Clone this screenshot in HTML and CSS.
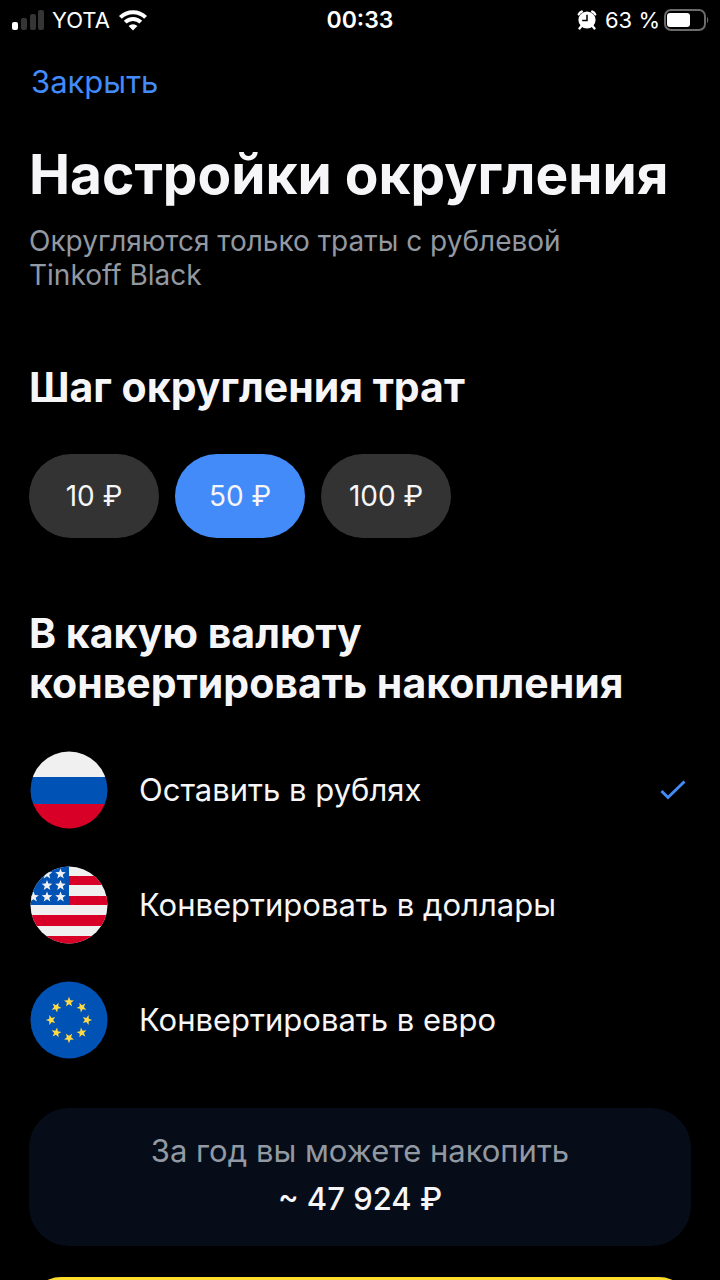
FILE: index.html
```html
<!DOCTYPE html>
<html lang="ru">
<head>
  <meta charset="UTF-8">
  <meta name="viewport" content="width=device-width, initial-scale=1">
  <title>Настройки округления</title>
  <link rel="stylesheet" href="styles.css">
</head>
<body>
  <div class="screen">

    <!-- Статус-бар -->
    <header class="status">
      <div class="status-left">
        <svg class="signal" width="34" height="20" viewBox="0 0 34 20" aria-hidden="true">
          <rect x="2" y="12" width="6" height="8" rx="2" fill="#fff"/>
          <rect x="11" y="8" width="6" height="12" rx="2" fill="#353535"/>
          <rect x="20" y="4" width="6" height="16" rx="2" fill="#353535"/>
          <rect x="28" y="0" width="6" height="20" rx="2" fill="#353535"/>
        </svg>
        <span>YOTA</span>
        <svg width="30" height="22" viewBox="0 0 30 22" aria-hidden="true">
          <g fill="none" stroke="#fff" stroke-width="4">
            <path d="M2.4 8.4a17.8 17.8 0 0 1 25.2 0"/>
            <path d="M7.2 13.2a11 11 0 0 1 15.6 0"/>
          </g>
          <path d="M15 21.4l-4.4-4.4a6.2 6.2 0 0 1 8.8 0z" fill="#fff"/>
        </svg>
      </div>
      <span class="status-time">00:33</span>
      <div class="status-right">
        <svg width="20" height="20" viewBox="0 0 20 20" aria-hidden="true">
          <g fill="none" stroke="#fff" stroke-width="2.4" stroke-linecap="round">
            <path d="M1.8 4.400a5 5 0 0 1 3-2.800M18.200 4.400a5 5 0 0 0-3-2.800M4.500 16l-2 2.400M15.500 16l2 2.400"/>
          </g>
          <circle cx="10" cy="10" r="8.600" fill="#fff"/>
          <path d="M10 4.800v5.700H5.200" fill="none" stroke="#000" stroke-width="1.500"/>
        </svg>
        <span>63 %</span>
        <svg class="battery" width="46" height="22" viewBox="0 0 46 22" aria-hidden="true">
          <rect x="1" y="1" width="40" height="20" rx="6" fill="none" stroke="#6b6b6b" stroke-width="2"/>
          <rect x="3" y="4" width="23" height="14" rx="3" fill="#fff"/>
          <path d="M43 7.500q2.500 3.500 0 7z" fill="#6b6b6b"/>
        </svg>
      </div>
    </header>

    <nav class="nav">
      <a href="#">Закрыть</a>
    </nav>

    <main class="content">
      <h1>Настройки округления</h1>
      <p class="subtitle">Округляются только траты с рублевой Tinkoff Black</p>

      <section class="step">
        <h2>Шаг округления трат</h2>
        <div class="chips">
          <button class="chip" type="button">10 ₽</button>
          <button class="chip chip-active" type="button">50 ₽</button>
          <button class="chip" type="button">100 ₽</button>
        </div>
      </section>

      <section class="currency">
        <h2>В какую валюту конвертировать накопления</h2>

        <label class="option">
          <svg class="flag" viewBox="0 0 78 78" aria-hidden="true">
            <defs>
              <clipPath id="circle"><circle cx="39" cy="39" r="38.500"/></clipPath>
              <polygon id="star" points="0,-10 2.500,-3.400 9.500,-3.100 4,1.300 5.900,8.100 0,4.200 -5.900,8.100 -4,1.300 -9.500,-3.100 -2.500,-3.400"/>
            </defs>
            <g clip-path="url(#circle)">
              <rect width="78" height="26" fill="#f0f0f0"/>
              <rect y="26" width="78" height="27" fill="#0052b4"/>
              <rect y="53" width="78" height="25" fill="#d80027"/>
            </g>
          </svg>
          <span class="option-name">Оставить в рублях</span>
          <input type="radio" name="currency" checked>
          <svg class="check" viewBox="0 0 28 28" aria-hidden="true">
            <path d="M2.500 15l6.500 6.500L25.500 5.500" fill="none" stroke="#428bf9" stroke-width="3"/>
          </svg>
        </label>

        <label class="option">
          <svg class="flag" viewBox="0 0 78 78" aria-hidden="true">
            <g clip-path="url(#circle)">
              <rect width="78" height="78" fill="#f0f0f0"/>
              <path d="M39 10h39v9H39zM39 30h39v9H39zM0 49h78v11H0zM0 70h78v8H0z" fill="#d80027"/>
              <rect width="39" height="39" fill="#0052b4"/>
              <g fill="#f0f0f0">
                <use href="#star" transform="translate(17 8) scale(.56)"/>
                <use href="#star" transform="translate(30.500 8) scale(.56)"/>
                <use href="#star" transform="translate(17 19.500) scale(.56)"/>
                <use href="#star" transform="translate(30.500 19.500) scale(.56)"/>
                <use href="#star" transform="translate(3.500 31) scale(.56)"/>
                <use href="#star" transform="translate(17 31) scale(.56)"/>
                <use href="#star" transform="translate(30.500 31) scale(.56)"/>
              </g>
            </g>
          </svg>
          <span class="option-name">Конвертировать в доллары</span>
          <input type="radio" name="currency">
          <svg class="check" viewBox="0 0 28 28" aria-hidden="true">
            <path d="M2.500 15l6.500 6.500L25.500 5.500" fill="none" stroke="#428bf9" stroke-width="3"/>
          </svg>
        </label>

        <label class="option">
          <svg class="flag" viewBox="0 0 78 78" aria-hidden="true">
            <circle cx="39" cy="39" r="38.500" fill="#0052b4"/>
            <g fill="#ffda44">
              <use href="#star" transform="translate(39 21) scale(.52)"/>
              <use href="#star" transform="translate(51.700 26.300) rotate(45) scale(.52)"/>
              <use href="#star" transform="translate(57 39) rotate(90) scale(.52)"/>
              <use href="#star" transform="translate(51.700 51.700) rotate(135) scale(.52)"/>
              <use href="#star" transform="translate(39 57) rotate(180) scale(.52)"/>
              <use href="#star" transform="translate(26.300 51.700) rotate(225) scale(.52)"/>
              <use href="#star" transform="translate(21 39) rotate(270) scale(.52)"/>
              <use href="#star" transform="translate(26.300 26.300) rotate(315) scale(.52)"/>
            </g>
          </svg>
          <span class="option-name">Конвертировать в евро</span>
          <input type="radio" name="currency">
          <svg class="check" viewBox="0 0 28 28" aria-hidden="true">
            <path d="M2.500 15l6.500 6.500L25.500 5.500" fill="none" stroke="#428bf9" stroke-width="3"/>
          </svg>
        </label>
      </section>

      <div class="forecast">
        <p class="forecast-label">За год вы можете накопить</p>
        <p class="forecast-sum">~ 47 924 ₽</p>
      </div>

      <button class="submit" type="button" aria-label="Сохранить"></button>
    </main>
  </div>
</body>
</html>
```
FILE: styles.css
```css
* {
  box-sizing: border-box;
}

body {
  margin: 0;
  background: #000;
  color: #f6f6f8;
  font-family: Inter, "Liberation Sans", sans-serif;
}

h1, h2, p {
  margin: 0;
}

.screen {
  height: 100vh;
  overflow: hidden;
}

/* Статус-бар */
.status {
  display: grid;
  grid-template-columns: 1fr auto 1fr;
  align-items: center;
  height: 39px;
  padding: 0 10px;
  font-size: 22px;
  color: #fff;
}

.status-left,
.status-right {
  display: flex;
  align-items: center;
  gap: 8px;
}

.status-right {
  justify-content: flex-end;
}

.battery {
  margin-left: -4px;
}

.status-time {
  font-size: 23px;
  font-weight: 600;
}

.nav {
  display: flex;
  align-items: center;
  height: 84px;
  padding: 0 31px;
}

.nav a {
  color: #428bf9;
  font-size: 31px;
  text-decoration: none;
}

.content {
  padding: 17px 29px 0;
}

h1 {
  font-size: 55px;
  line-height: 68px;
  font-weight: 700;
  white-space: nowrap;
}

.subtitle {
  max-width: 560px;
  margin-top: 16px;
  color: #9299a2;
  font-size: 28px;
  line-height: 34px;
}

h2 {
  font-size: 41px;
  line-height: 50px;
  font-weight: 700;
}

.step {
  margin-top: 70px;
}

.chips {
  display: flex;
  gap: 16px;
  margin-top: 42px;
}

.chip {
  width: 130px;
  height: 84px;
  padding: 0;
  border: none;
  border-radius: 42px;
  background: #333;
  color: #f6f6f8;
  font-family: inherit;
  font-size: 28px;
}

.chip-active {
  background: #428bf9;
}

.currency {
  margin-top: 70px;
}

.currency h2 {
  margin-bottom: 24px;
}

.option {
  display: grid;
  grid-template-columns: 78px 1fr 28px;
  column-gap: 31px;
  align-items: center;
  height: 115px;
  padding: 0 4px 0 1px;
}

.flag {
  width: 78px;
  height: 78px;
}

.option-name {
  font-size: 31px;
}

.option input,
.check {
  grid-row: 1;
  grid-column: 3;
  width: 28px;
  height: 28px;
  margin: 0;
}

.option input {
  appearance: none;
}

.check {
  visibility: hidden;
}

.option input:checked + .check {
  visibility: visible;
}

.forecast {
  margin-top: 31px;
  padding: 20px 20px 22px;
  border-radius: 40px;
  background: #060d18;
  text-align: center;
}

.forecast-label {
  color: #9299a2;
  font-size: 31px;
  line-height: 46px;
}

.forecast-sum {
  font-size: 31px;
  line-height: 50px;
  font-weight: 500;
}

.submit {
  display: block;
  width: 100%;
  height: 112px;
  margin-top: 31px;
  border: none;
  border-radius: 32px;
  background: #ffdd2d;
}
```
